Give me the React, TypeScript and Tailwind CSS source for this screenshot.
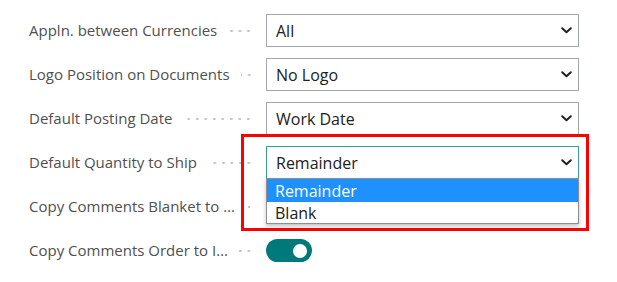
import React from "react";

function Chevron() {
  return (
    <svg width="11" height="7" viewBox="0 0 11 7" className="shrink-0">
      <path d="M1.2 1.2 L5.5 5.3 L9.8 1.2" fill="none" stroke="#222" strokeWidth="2" strokeLinecap="round" strokeLinejoin="round" />
    </svg>
  );
}

function Label({ text }: { text: string }) {
  return (
    <div className="flex w-[237px] shrink-0 items-center pr-[13px]">
      <span className="shrink-0 whitespace-nowrap text-[15px] text-[#505050]">{text}</span>
      <span className="ml-[11px] h-[4px] min-w-0 flex-1 bg-[radial-gradient(circle,#c4c4c4_1px,transparent_1.4px)] bg-[length:8.5px_4px] bg-right bg-repeat-x" />
    </div>
  );
}

function Select({ value, focused }: { value: string; focused?: boolean }) {
  return (
    <div
      className={
        focused
          ? "flex h-[33px] w-[313px] items-center justify-between border border-[#3a9c9c] bg-white pl-[9px] pr-[6px]"
          : "flex h-[33px] w-[313px] items-center justify-between border border-[#a3a6ad] bg-white pl-[9px] pr-[6px]"
      }
    >
      <span className="text-[16px] text-[#212121]">{value}</span>
      <Chevron />
    </div>
  );
}

export default function App() {
  return (
    <div className="relative h-[282px] w-[617px] bg-white font-['Open_Sans',sans-serif]">
      <div className="flex flex-col gap-[11px] pl-[29px] pt-[14px]">
        <div className="flex h-[33px] items-center">
          <Label text="Appln. between Currencies" />
          <Select value="All" />
        </div>
        <div className="flex h-[33px] items-center">
          <Label text="Logo Position on Documents" />
          <Select value="No Logo" />
        </div>
        <div className="flex h-[33px] items-center">
          <Label text="Default Posting Date" />
          <Select value="Work Date" />
        </div>
        <div className="relative z-10 flex h-[33px] items-center">
          <Label text="Default Quantity to Ship" />
          <div className="relative">
            <Select value="Remainder" focused />
            <div className="absolute left-0 top-[32px] w-[313px] border border-[#8f8f8f] bg-white shadow-[0_2px_4px_rgba(0,0,0,0.25)]">
              <div className="flex h-[23px] items-center bg-[#1e90ff] pl-[8px] text-[16px] text-white">Remainder</div>
              <div className="flex h-[21px] items-center pl-[8px] text-[16px] text-[#212121]">Blank</div>
            </div>
          </div>
        </div>
        <div className="flex h-[33px] items-center">
          <Label text="Copy Comments Blanket to …" />
        </div>
        <div className="flex h-[33px] items-center">
          <Label text="Copy Comments Order to I…" />
          <div className="flex h-[23px] w-[46px] items-center justify-end rounded-full bg-[#00797b] pr-[5px]">
            <div className="h-[14px] w-[14px] rounded-full bg-white" />
          </div>
        </div>
      </div>
      <div className="pointer-events-none absolute left-[241px] top-[134px] z-20 h-[97px] w-[348px] border-[3px] border-[#ff0000]" />
    </div>
  );
}
